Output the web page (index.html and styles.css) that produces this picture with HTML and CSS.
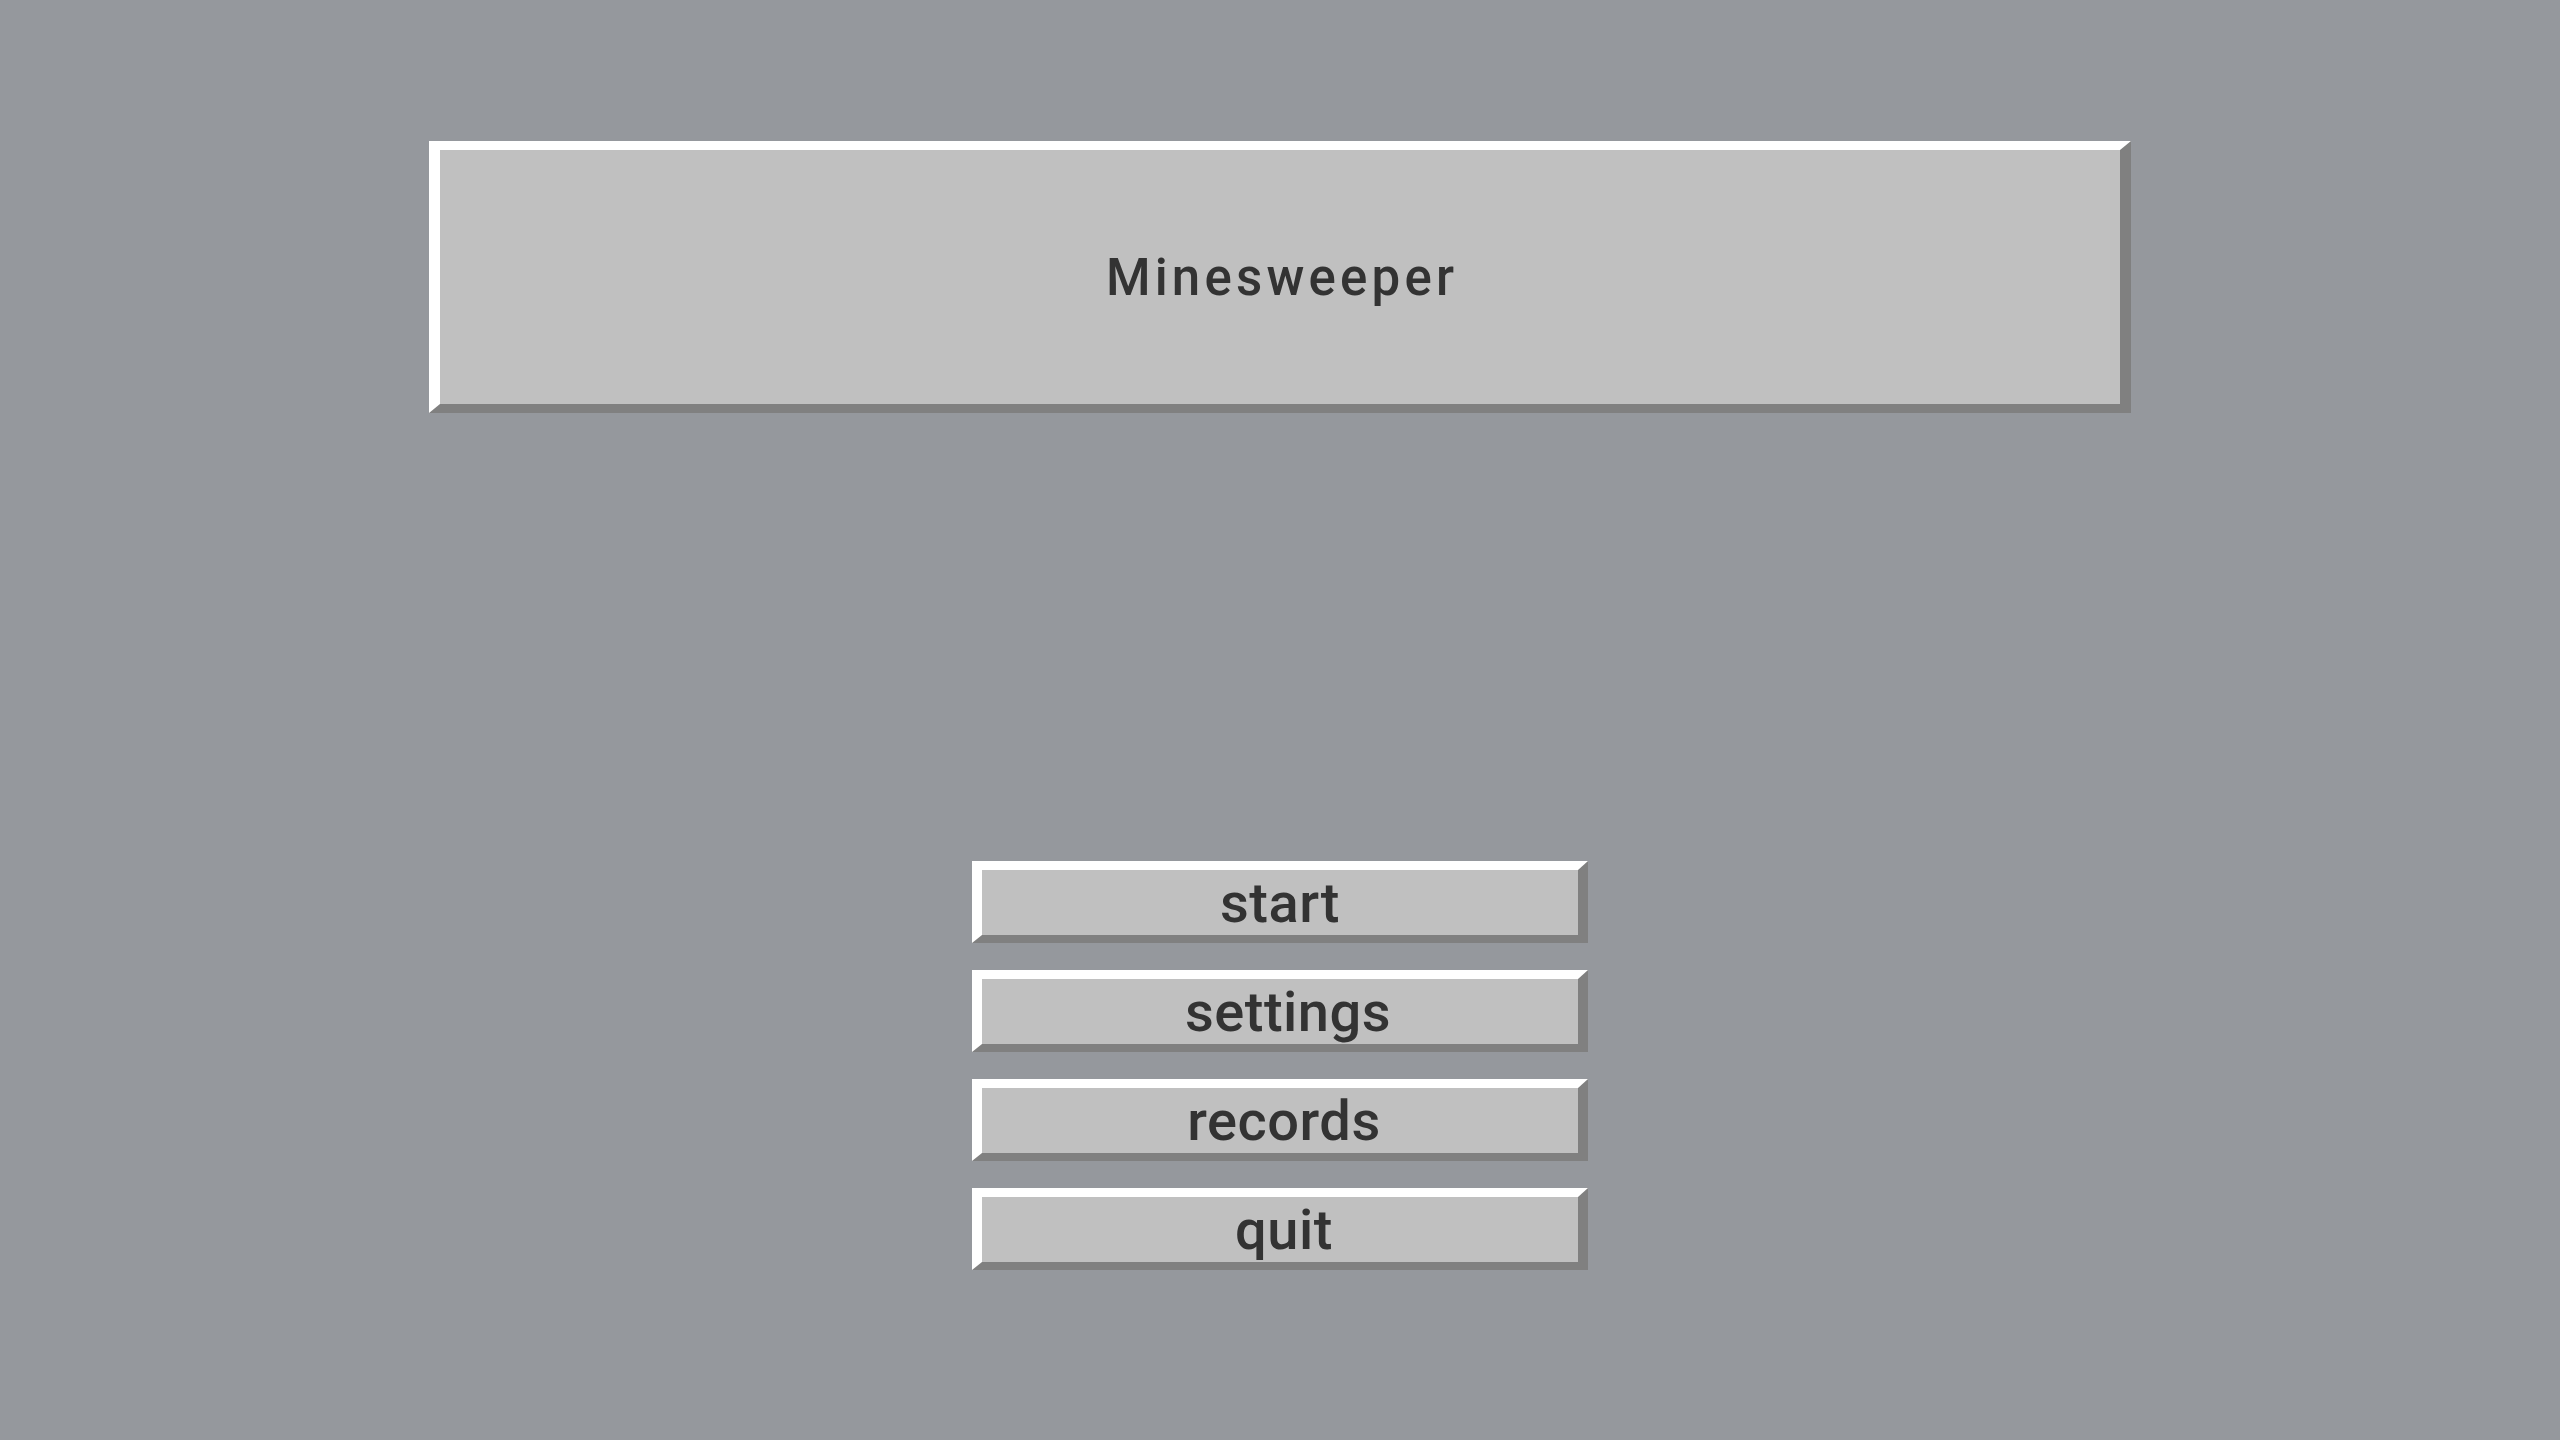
FILE: index.html
```html
<!DOCTYPE html>
<html lang="en">
<head>
<meta charset="utf-8">
<title>Minesweeper</title>
<link rel="stylesheet" href="styles.css">
</head>
<body>
<main class="screen">
  <header class="title-panel">
    <h1 class="title">Minesweeper</h1>
  </header>
  <nav class="menu">
    <button class="menu-button">start</button>
    <button class="menu-button menu-button--shift">settings</button>
    <button class="menu-button menu-button--nudge">records</button>
    <button class="menu-button menu-button--nudge">quit</button>
  </nav>
</main>
</body>
</html>
```

FILE: styles.css
```css
html, body {
  margin: 0;
  padding: 0;
}

body {
  width: 2560px;
  height: 1440px;
  background: #95989d;
  font-family: Roboto, "Liberation Sans", sans-serif;
  color: #333333;
  overflow: hidden;
}

.screen {
  display: flex;
  flex-direction: column;
  align-items: center;
  padding-top: 141px;
}

.title-panel {
  box-sizing: border-box;
  width: 1702px;
  height: 272px;
  background: #c0c0c0;
  border-style: solid;
  border-width: 9px 11px 9px 11px;
  border-color: #ffffff #808080 #808080 #ffffff;
  display: flex;
  align-items: center;
  justify-content: center;
}

.title {
  margin: 0;
  padding-left: 4px;
  font-size: 51px;
  font-weight: 500;
  letter-spacing: 4.2px;
  line-height: 1;
}

.menu {
  margin-top: 448px;
  display: flex;
  flex-direction: column;
  gap: 27px;
}

.menu-button {
  box-sizing: border-box;
  width: 616px;
  height: 82px;
  margin: 0;
  padding: 0;
  background: #c0c0c0;
  border-style: solid;
  border-width: 9px 10px 8px 10px;
  border-color: #ffffff #808080 #808080 #ffffff;
  font-family: Roboto, "Liberation Sans", sans-serif;
  font-size: 56px;
  font-weight: 500;
  color: #333333;
  letter-spacing: 0.5px;
  line-height: 1;
  display: flex;
  align-items: center;
  justify-content: center;
}

.menu-button--shift {
  padding-left: 16px;
}

.menu-button--nudge {
  padding-left: 8px;
}
```
